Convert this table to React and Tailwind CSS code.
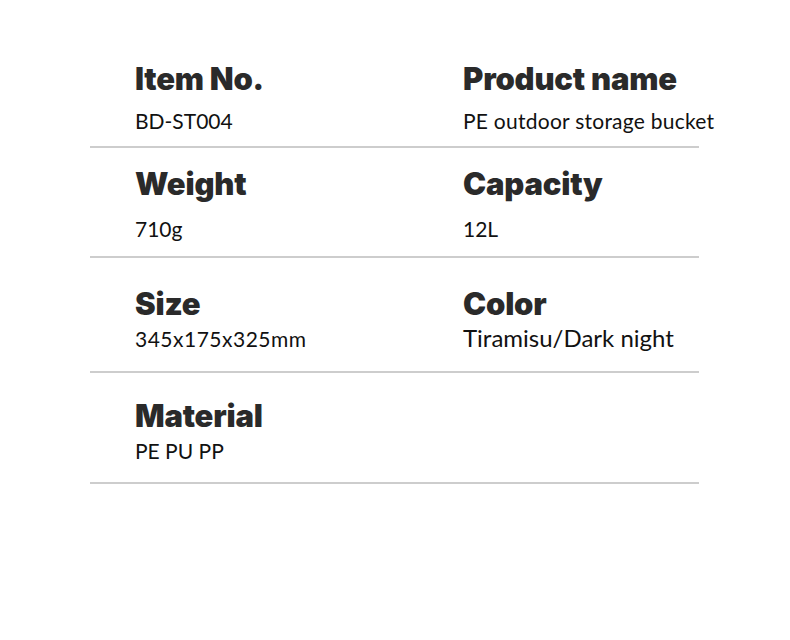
import React from 'react';

const ROWS = [
  {
    h: 'h-[146px]', pt: 'pt-[62px]',
    cells: [
      {label: 'Item No.', value: 'BD-ST004', gap: 'mt-[15px]', size: 'text-[21px]'},
      {label: 'Product name', value: 'PE outdoor storage bucket', gap: 'mt-[15px]', size: 'text-[21px] tracking-[0.25px]'},
    ],
  },
  {
    h: 'h-[110px]', pt: 'pt-[19px]', border: true,
    cells: [
      {label: 'Weight', value: '710g', gap: 'mt-[18px]', size: 'text-[21px]'},
      {label: 'Capacity', value: '12L', gap: 'mt-[18px]', size: 'text-[21px]'},
    ],
  },
  {
    h: 'h-[115px]', pt: 'pt-[29px]', border: true,
    cells: [
      {label: 'Size', value: '345x175x325mm', gap: 'mt-[8px]', size: 'text-[21px] tracking-[0.5px]'},
      {label: 'Color', value: 'Tiramisu/Dark night', gap: 'mt-[6px]', size: 'text-[24px]'},
    ],
  },
  {
    h: 'h-[111px]', pt: 'pt-[26px]', border: true,
    cells: [
      {label: 'Material', value: 'PE PU PP', gap: 'mt-[8px]', size: 'text-[21px]'},
    ],
  },
];

export default function App() {
  return (
    <div className="w-[790px] h-[640px] bg-white font-['Lato',sans-serif]">
      <div className="ml-[90px] w-[609px] border-b-2 border-[#cdcdcd]">
        {ROWS.map((row, i) => (
          <div
            key={i}
            className={`${row.h} ${row.pt} pl-[45px] grid grid-cols-[328px_1fr] ${row.border ? 'border-t-2 border-[#cdcdcd]' : ''}`}>
            {row.cells.map(cell => (
              <div key={cell.label} className="whitespace-nowrap">
                <div className="font-['Inter',sans-serif] text-[31px] leading-[33px] font-black tracking-[-0.2px] text-[#2a2a2a]">
                  {cell.label}
                </div>
                <div className={`${cell.gap} ${cell.size} leading-none text-[#111]`}>{cell.value}</div>
              </div>
            ))}
          </div>
        ))}
      </div>
    </div>
  );
}
